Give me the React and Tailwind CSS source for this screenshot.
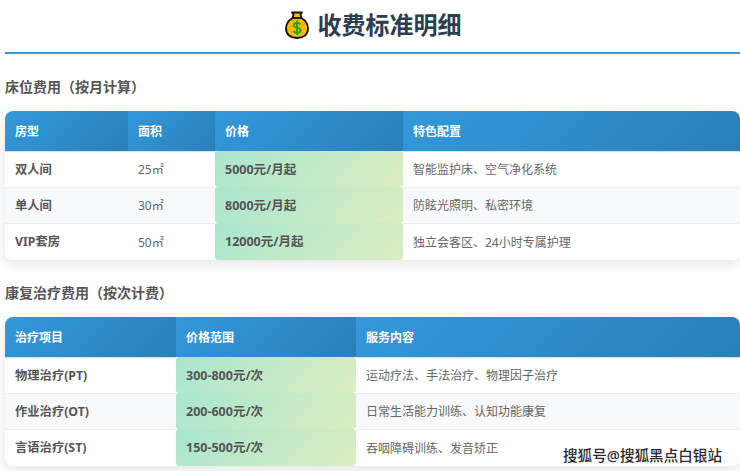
const roomRows = [
  ['双人间', '25㎡', '5000元/月起', '智能监护床、空气净化系统'],
  ['单人间', '30㎡', '8000元/月起', '防眩光照明、私密环境'],
  ['VIP套房', '50㎡', '12000元/月起', '独立会客区、24小时专属护理'],
];

const therapyRows = [
  ['物理治疗(PT)', '300-800元/次', '运动疗法、手法治疗、物理因子治疗'],
  ['作业治疗(OT)', '200-600元/次', '日常生活能力训练、认知功能康复'],
  ['言语治疗(ST)', '150-500元/次', '吞咽障碍训练、发音矫正'],
];

function MoneyBag() {
  return (
    <svg width="24" height="28" viewBox="0 0 24 28">
      <path d="M7 1.500h10l-1.500 2 1 3.500c4 2.500 6.500 6 6.500 10.500 0 6-4.500 9.500-11 9.500S1 23.500 1 17.500C1 13 3.500 9.500 7.500 7l1-3.500z" fill="#fdb900" stroke="#111" strokeWidth="1.800" strokeLinejoin="round" />
      <path d="M8 7h8" stroke="#111" strokeWidth="1.800" />
      <path d="M15.500 13.500c-.6-1.200-2-1.700-3.500-1.700-1.900 0-3.300 1-3.300 2.500 0 3.400 7 1.700 7 5 0 1.500-1.500 2.500-3.500 2.500-1.700 0-3.100-.7-3.700-2M12 9.500v14.500" fill="none" stroke="#17a317" strokeWidth="1.800" />
    </svg>
  );
}

function FeeTable({ headers, widths, rows, priceIndex }) {
  return (
    <div className="overflow-hidden rounded-lg shadow-[0_4px_12px_rgba(0,0,0,0.1)]">
      <table className="w-full table-fixed border-separate border-spacing-0 text-[12px]">
        <colgroup>
          {widths.map((w, i) => (
            <col key={i} style={{ width: w }} />
          ))}
        </colgroup>
        <thead>
          <tr>
            {headers.map((h) => (
              <th key={h} className="h-10 bg-[linear-gradient(135deg,#3498db,#2980b9)] px-2.5 pt-0.5 text-left font-bold text-white">
                {h}
              </th>
            ))}
          </tr>
        </thead>
        <tbody>
          {rows.map((row, r) => (
            <tr key={r} className={r === 1 ? 'bg-[#f8f9fa]' : 'bg-white'}>
              {row.map((cell, c) => {
                if (c === priceIndex) {
                  return (
                    <td key={c} className={`rounded-[3px] bg-[linear-gradient(135deg,#a8e6cf,#dcedc1)] px-2.5 pt-0.5 text-[12.500px] font-bold text-[#555555] ${r === 2 ? 'h-[37px]' : 'h-9'}`}>
                      {cell}
                    </td>
                  );
                }
                return (
                  <td key={c} className={`border-t px-2.5 pt-px ${r === 2 ? 'h-[37px]' : 'h-9'} ${r === 0 ? 'border-[#cfe5f5]' : 'border-[#eeeeee]'} ${c === 0 ? 'text-[12.300px] font-bold text-[#555555]' : 'text-[#666666]'}`}>
                    {cell}
                  </td>
                );
              })}
            </tr>
          ))}
        </tbody>
      </table>
    </div>
  );
}

export default function App() {
  return (
    <div className="relative h-[471px] overflow-hidden bg-white pl-[5px] font-['Noto_Sans','Noto_Sans_CJK_SC',sans-serif]">
      <div className="flex h-[54px] items-center justify-center gap-[9px] border-b-2 border-[#3498db] pb-0.5 pl-px">
        <MoneyBag />
        <h1 className="text-[24px] font-bold text-[#2c3e50]">收费标准明细</h1>
      </div>

      <h2 className="mt-[23px] mb-[14px] text-[14px] leading-5 font-bold text-[#555555]">床位费用（按月计算）</h2>
      <FeeTable
        headers={['房型', '面积', '价格', '特色配置']}
        widths={['123px', '87px', '188px', '337px']}
        rows={roomRows}
        priceIndex={2}
      />

      <h2 className="mt-[23px] mb-[14px] text-[14px] leading-5 font-bold text-[#555555]">康复治疗费用（按次计费）</h2>
      <FeeTable
        headers={['治疗项目', '价格范围', '服务内容']}
        widths={['171px', '180px', '384px']}
        rows={therapyRows}
        priceIndex={1}
      />

      <div className="absolute top-[447px] left-[563px] text-[14.600px] leading-4 font-medium text-[#2a2a2a] [text-shadow:0_0_2px_#fff,0_0_2px_#fff]">
        搜狐号@搜狐黑点白银站
      </div>
    </div>
  );
}
